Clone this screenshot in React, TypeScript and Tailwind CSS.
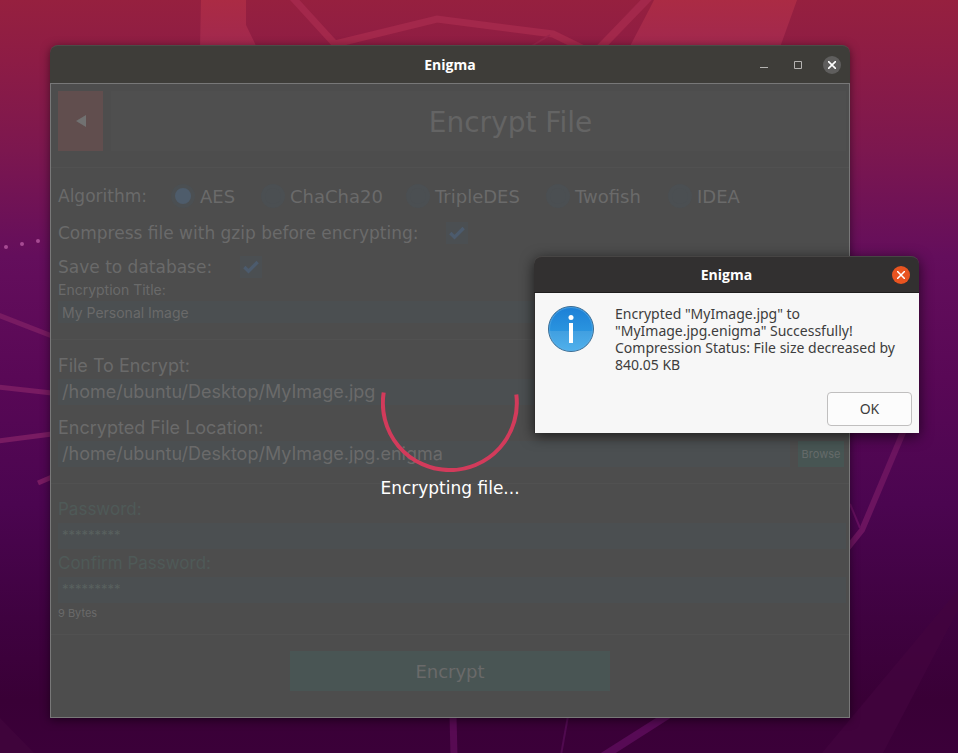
import type { ReactNode } from "react";
import { Check } from "lucide-react";

const ALGORITHMS = [
  { name: "AES", width: "w-[90px]" },
  { name: "ChaCha20", width: "w-[145px]" },
  { name: "TripleDES", width: "w-[140px]" },
  { name: "Twofish", width: "w-[122px]" },
  { name: "IDEA", width: "w-[80px]" },
];

function Wallpaper() {
  return (
    <svg
      aria-hidden="true"
      className="absolute inset-0 h-full w-full"
      viewBox="0 0 958 753"
      preserveAspectRatio="xMidYMid slice"
      fill="none"
    >
      <defs>
        <linearGradient id="sky" x1="0" y1="0" x2="0" y2="1">
          <stop offset="0" stopColor="#96203f" />
          <stop offset="0.08" stopColor="#8d1c45" />
          <stop offset="0.2" stopColor="#7c174f" />
          <stop offset="0.34" stopColor="#640e5c" />
          <stop offset="0.5" stopColor="#590856" />
          <stop offset="0.67" stopColor="#4b0550" />
          <stop offset="0.82" stopColor="#3f0240" />
          <stop offset="0.93" stopColor="#390036" />
          <stop offset="1" stopColor="#3b0039" />
        </linearGradient>
        <linearGradient id="band" x1="0" y1="0" x2="0" y2="48" gradientUnits="userSpaceOnUse">
          <stop offset="0" stopColor="#ab2b44" />
          <stop offset="1" stopColor="#a1284f" />
        </linearGradient>
      </defs>
      <rect width="958" height="753" fill="url(#sky)" />
      <path d="M201 0H246V25L258 50H200Z" fill="url(#band)" />
      <path d="M654 0H797L779 50H628L650 8Z" fill="url(#band)" />
      <path d="M292 -3L335 44L437 19L553 34L590 52" stroke="#a3284b" strokeWidth="7" />
      <path d="M598 50L652 -6" stroke="#a3284b" strokeWidth="8" />
      <path d="M550 35L530 47" stroke="#98244a" strokeWidth="2" />
      <g stroke="#781b62" strokeWidth="5">
        <path d="M-2 315L52 336" />
        <path d="M-2 387L52 393" />
        <path d="M-2 441L52 434" />
        <path d="M38 483L52 477" />
      </g>
      <path d="M904 430L862 530L846 550" stroke="#6b145f" strokeWidth="6" />
      <path d="M850 504L860 528" stroke="#661060" strokeWidth="2" />
      <path d="M453 716L454 755" stroke="#570a52" strokeWidth="7" />
      <path d="M568 716L561 755" stroke="#500a4f" strokeWidth="2" />
      <path d="M602 757L668 715" stroke="#570a55" strokeWidth="8" />
      <path d="M958 590L822 753H883L958 610Z" fill="#43043f" opacity="0.7" />
      <path d="M0 718L34 753H0Z" fill="#42063e" opacity="0.6" />
      <g fill="#a74b93">
        <circle cx="6" cy="247" r="2" />
        <circle cx="22" cy="244" r="2" />
        <circle cx="38" cy="241" r="2" />
      </g>
    </svg>
  );
}

function Section({ children, className = "" }: { children: ReactNode; className?: string }) {
  return <section className={`border-t border-[#515151] ${className}`}>{children}</section>;
}

function TickBox({ id }: { id: string }) {
  return (
    <span className="grid size-[22px] place-items-center">
      <input
        id={id}
        type="checkbox"
        defaultChecked
        className="col-start-1 row-start-1 size-[22px] appearance-none bg-[#4b4f52]"
      />
      <Check
        aria-hidden="true"
        className="pointer-events-none col-start-1 row-start-1 size-5 text-[#4c5b6d]"
        strokeWidth={4}
        strokeLinecap="butt"
        strokeLinejoin="miter"
      />
    </span>
  );
}

function BrowseButton() {
  return (
    <button type="button" className="mr-[5px] h-[26px] w-[46px] bg-[#475553] font-['Inter',sans-serif] text-[11px] text-[#656b6a]">
      Browse
    </button>
  );
}

function PathRow({ id, label, value }: { id: string; label: string; value: string }) {
  return (
    <div>
      <label htmlFor={id} className="block h-[26px] w-fit font-['Inter',sans-serif] text-[18px] leading-[26px]">
        {label}
      </label>
      <div className="flex gap-2">
        <input
          id={id}
          type="text"
          defaultValue={value}
          className="h-[26px] min-w-0 flex-1 bg-[#4b4f51] px-1 pb-[2px] font-['Inter',sans-serif] text-[18px]"
        />
        <BrowseButton />
      </div>
    </div>
  );
}

function PasswordRow({ id, label }: { id: string; label: string }) {
  return (
    <div>
      <label htmlFor={id} className="block h-7 w-fit font-['Inter',sans-serif] text-[17px] leading-7 text-[#4f5a58]">
        {label}
      </label>
      <input
        id={id}
        type="text"
        defaultValue="*********"
        className="block h-[26px] w-full bg-[#4b4f51] px-1 pb-[2px] font-['Inter',sans-serif] text-[13px] text-[#59615f]"
      />
    </div>
  );
}

function EnigmaWindow() {
  return (
    <main className="absolute top-[45px] left-[50px] w-[800px] rounded-t-lg shadow-[0_2px_10px_rgba(0,0,0,0.5)]">
      <header className="relative flex h-[38px] items-center justify-end rounded-t-lg border-t border-[#4c4b47] bg-[#3e3d39] pr-[9px]">
        <h1 className="absolute inset-x-0 text-center font-['Open_Sans',sans-serif] text-sm font-bold text-white">
          Enigma
        </h1>
        <div className="relative flex items-center gap-4">
          <button type="button" aria-label="Minimize" className="grid size-[18px] place-items-center">
            <svg width="8" height="8" fill="none" stroke="#b4b3b1" aria-hidden="true">
              <path d="M0 6.500H8" />
            </svg>
          </button>
          <button type="button" aria-label="Maximize" className="grid size-[18px] place-items-center">
            <svg width="8" height="8" fill="none" stroke="#b4b3b1" aria-hidden="true">
              <path d="M.5.5H7.500V7.500H.5Z" />
            </svg>
          </button>
          <button type="button" aria-label="Close" className="grid size-[18px] place-items-center rounded-full bg-[#5f5e5d]">
            <svg width="8" height="8" fill="none" stroke="#fff" strokeWidth="1.600" aria-hidden="true">
              <path d="M0 0L8 8M8 0L0 8" />
            </svg>
          </button>
        </div>
      </header>

      <div className="relative border border-[#787878] bg-[#4d4d4d] font-['DejaVu_Sans',sans-serif] text-[18px] text-[#6a6a6a]">
        <div className="flex gap-2 pt-[7px] pr-[3px] pb-4 pl-[7px]">
          <button type="button" aria-label="Back" className="grid h-[60px] w-[45px] place-items-center bg-[#614e4e]">
            <svg width="10" height="12" fill="#717171" aria-hidden="true">
              <path d="M0 6L10 0V12Z" />
            </svg>
          </button>
          <h2 className="flex flex-1 items-center justify-center bg-[#4f4f4f] pt-1 pl-16 text-[28px] text-[#646464]">
            Encrypt File
          </h2>
        </div>

        <form>
          <Section className="pt-4 pr-[3px] pb-4 pl-[7px]">
            <fieldset className="flex h-6 items-center">
              <legend className="float-left w-[113px] text-[17px] leading-5">Algorithm:</legend>
              {ALGORITHMS.map(({ name, width }) => (
                <label key={name} className={`flex items-center gap-[5px] ${width}`}>
                  <input
                    type="radio"
                    name="algorithm"
                    defaultChecked={name === "AES"}
                    className="size-6 shrink-0 appearance-none rounded-full border-4 border-[#4b4f52] bg-[#4b4f52] checked:bg-[#4e5c6b]"
                  />
                  {name}
                </label>
              ))}
            </fieldset>
            <div className="mt-[14px] flex gap-7 text-[17px] leading-[22px]">
              <label htmlFor="gzip">Compress file with gzip before encrypting:</label>
              <TickBox id="gzip" />
            </div>
            <div className="mt-3 flex gap-7 text-[17px] leading-[22px]">
              <label htmlFor="save">Save to database:</label>
              <TickBox id="save" />
            </div>
            <label htmlFor="title" className="block w-fit font-['Inter',sans-serif] text-sm leading-[23px]">
              Encryption Title:
            </label>
            <input
              id="title"
              type="text"
              defaultValue="My Personal Image"
              className="block h-[22px] w-full bg-[#4b4f51] px-1 font-['Inter',sans-serif] text-sm"
            />
          </Section>

          <Section className="flex flex-col gap-[10px] pt-[13px] pb-4 pl-[7px]">
            <PathRow id="source" label="File To Encrypt:" value="/home/ubuntu/Desktop/MyImage.jpg" />
            <PathRow
              id="target"
              label="Encrypted File Location:"
              value="/home/ubuntu/Desktop/MyImage.jpg.enigma"
            />
          </Section>

          <Section className="pt-[11px] pr-[3px] pb-[11px] pl-[7px]">
            <PasswordRow id="password" label="Password:" />
            <PasswordRow id="confirm" label="Confirm Password:" />
            <p className="font-['Inter',sans-serif] text-[11px] leading-5">9 Bytes</p>
          </Section>

          <Section className="flex justify-center pt-4 pb-[26px]">
            <button type="button" className="h-10 w-80 bg-[#495554]">
              Encrypt
            </button>
          </Section>
        </form>

        <div role="status" className="absolute inset-x-0 top-[250px] flex flex-col items-center">
          <svg width="138" height="138" fill="none" aria-hidden="true">
            <path d="M2.700 58.500A67 67 0 1 0 135.300 60.500" stroke="#d23b5b" strokeWidth="4" />
          </svg>
          <p className="mt-1 text-[17px] leading-6 text-white">Encrypting file...</p>
        </div>
      </div>
    </main>
  );
}

function ResultDialog() {
  return (
    <div
      role="dialog"
      aria-labelledby="dialog-title"
      className="absolute top-[256px] left-[534px] w-[385px] rounded-t-lg font-['Noto_Sans',sans-serif] shadow-[0_3px_14px_rgba(0,0,0,0.65)]"
    >
      <header className="relative flex h-[37px] items-center justify-end rounded-t-lg border-t border-b border-t-[#474544] border-b-[#201e1e] bg-[#323030] pr-[9px]">
        <h2
          id="dialog-title"
          className="absolute inset-x-0 text-center font-['Open_Sans',sans-serif] text-sm font-bold text-white"
        >
          Enigma
        </h2>
        <button type="button" aria-label="Close dialog" className="relative grid size-[18px] place-items-center rounded-full bg-[#e95420]">
          <svg width="8" height="8" fill="none" stroke="#fff" strokeWidth="1.500" aria-hidden="true">
            <path d="M0 0L8 8M8 0L0 8" />
          </svg>
        </button>
      </header>
      <div className="border-l border-[#302e2e] bg-[#f7f7f7] pt-3 pr-[7px] pb-[7px] pl-3">
        <div className="flex h-[87px] gap-5">
          <svg width="48" height="48" className="shrink-0" aria-hidden="true">
            <defs>
              <linearGradient id="info" x1="0" y1="0" x2="0" y2="1">
                <stop offset="0" stopColor="#1c7fd6" />
                <stop offset="0.540" stopColor="#2a94df" />
                <stop offset="0.540" stopColor="#419fe0" />
                <stop offset="1" stopColor="#50b1ec" />
              </linearGradient>
            </defs>
            <circle cx="24" cy="24" r="22.500" fill="url(#info)" stroke="#3c6c92" />
            <circle cx="24" cy="24" r="21.500" stroke="#5bb0ea" strokeOpacity="0.600" fill="none" />
            <circle cx="24" cy="12.500" r="2.500" fill="#fff" />
            <rect x="22" y="18" width="4" height="20" fill="#fff" />
          </svg>
          <p className="text-sm leading-[17px] text-[#3d3d3d]">
            Encrypted "MyImage.jpg" to
            <br />
            "MyImage.jpg.enigma" Successfully!
            <br />
            Compression Status: File size decreased by
            <br />
            840.05 KB
          </p>
        </div>
        <div className="flex justify-end">
          <button type="button" className="h-[34px] w-[85px] rounded-[4px] border border-[#c0bfbf] bg-[#fcfcfc] text-sm text-[#3d3d3d]">
            OK
          </button>
        </div>
      </div>
    </div>
  );
}

export default function App() {
  return (
    <div className="relative min-h-screen overflow-hidden bg-[#3b0039]">
      <Wallpaper />
      <EnigmaWindow />
      <ResultDialog />
    </div>
  );
}
